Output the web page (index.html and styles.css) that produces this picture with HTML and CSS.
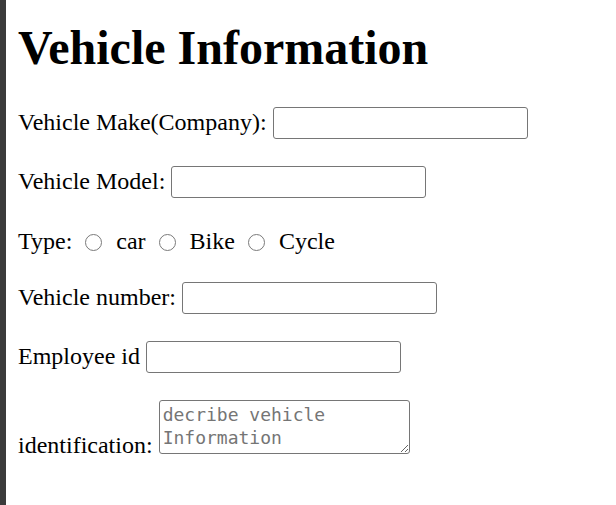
FILE: index.html
```html
<!DOCTYPE html>
<html lang="en">
<head>
<meta charset="utf-8">
<title>Vehicle Information</title>
<link rel="stylesheet" href="styles.css">
</head>
<body>
<main class="page">
  <h1 class="title">Vehicle Information</h1>
  <form class="form">
    <div class="row">Vehicle Make(Company): <input class="field" type="text"></div>
    <div class="row">Vehicle Model: <input class="field" type="text"></div>
    <div class="row row-type">Type: <input class="radio" type="radio" name="type"> car <input class="radio" type="radio" name="type"> Bike <input class="radio" type="radio" name="type"> Cycle</div>
    <div class="row">Vehicle number: <input class="field" type="text"></div>
    <div class="row">Employee id <input class="field" type="text"></div>
    <div class="row">identification: <textarea class="area" placeholder="decribe vehicle Information"></textarea></div>
  </form>
</main>
</body>
</html>
```
FILE: styles.css
```css
html, body {
  height: 100%;
}
body {
  margin: 0;
  box-sizing: border-box;
  border-left: 6px solid #3b3b3b;
  padding: 0 12px;
  background: #ffffff;
  color: #000000;
  font-family: "Liberation Serif", "Times New Roman", serif;
  font-size: 24px;
}
.page {
  display: block;
}
.title {
  font-size: 48px;
  font-weight: bold;
  margin: 20px 0 32px;
  line-height: normal;
}
.form {
  display: block;
}
.row {
  margin-bottom: 27px;
  line-height: normal;
  white-space: nowrap;
}
.row-type {
  padding-top: 3px;
}
.field {
  box-sizing: border-box;
  width: 255px;
  height: 32px;
  margin: 0;
  padding: 1px 3px;
  border: 1px solid #767676;
  border-radius: 3px;
  font-family: "Liberation Sans", Arial, sans-serif;
  font-size: 20px;
  vertical-align: baseline;
  background: #fff;
}
.radio {
  appearance: none;
  -webkit-appearance: none;
  box-sizing: border-box;
  width: 17px;
  height: 17px;
  margin: 0 8px 0 7px;
  border: 1.5px solid #7a7a7a;
  border-radius: 50%;
  background: #fff;
  vertical-align: -2px;
}
.area {
  box-sizing: border-box;
  width: 251px;
  height: 54px;
  margin: 0;
  padding: 2px 3px;
  border: 1px solid #767676;
  border-radius: 3px;
  font-family: "DejaVu Sans Mono", "Liberation Mono", monospace;
  font-size: 18px;
  line-height: 23px;
  vertical-align: -1px;
  resize: both;
}
.area::placeholder {
  color: #757575;
}
```
